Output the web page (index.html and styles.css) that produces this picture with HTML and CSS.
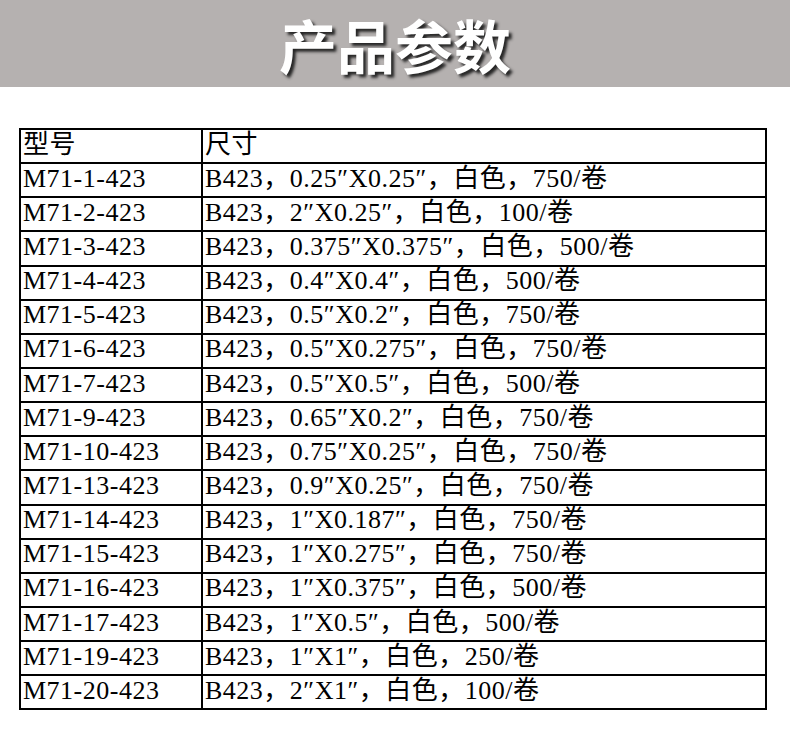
FILE: index.html
```html
<!DOCTYPE html>
<html lang="zh">
<head>
<meta charset="utf-8">
<title>产品参数</title>
<link rel="stylesheet" href="styles.css">
</head>
<body>
<header class="band">
  <h1 class="title">产品参数</h1>
</header>
<main class="content">
  <table class="spec">
    <colgroup><col class="c1"><col class="c2"></colgroup>
    <tbody>
      <tr><td>型号</td><td>尺寸</td></tr>
      <tr><td>M71-1-423</td><td>B423，0.25″X0.25″，白色，750/卷</td></tr>
      <tr><td>M71-2-423</td><td>B423，2″X0.25″，白色，100/卷</td></tr>
      <tr><td>M71-3-423</td><td>B423，0.375″X0.375″，白色，500/卷</td></tr>
      <tr><td>M71-4-423</td><td>B423，0.4″X0.4″，白色，500/卷</td></tr>
      <tr><td>M71-5-423</td><td>B423，0.5″X0.2″，白色，750/卷</td></tr>
      <tr><td>M71-6-423</td><td>B423，0.5″X0.275″，白色，750/卷</td></tr>
      <tr><td>M71-7-423</td><td>B423，0.5″X0.5″，白色，500/卷</td></tr>
      <tr><td>M71-9-423</td><td>B423，0.65″X0.2″，白色，750/卷</td></tr>
      <tr><td>M71-10-423</td><td>B423，0.75″X0.25″，白色，750/卷</td></tr>
      <tr><td>M71-13-423</td><td>B423，0.9″X0.25″，白色，750/卷</td></tr>
      <tr><td>M71-14-423</td><td>B423，1″X0.187″，白色，750/卷</td></tr>
      <tr><td>M71-15-423</td><td>B423，1″X0.275″，白色，750/卷</td></tr>
      <tr><td>M71-16-423</td><td>B423，1″X0.375″，白色，500/卷</td></tr>
      <tr><td>M71-17-423</td><td>B423，1″X0.5″，白色，500/卷</td></tr>
      <tr><td>M71-19-423</td><td>B423，1″X1″，白色，250/卷</td></tr>
      <tr><td>M71-20-423</td><td>B423，2″X1″，白色，100/卷</td></tr>
    </tbody>
  </table>
</main>
</body>
</html>
```
FILE: styles.css
```css
html, body {
  margin: 0;
  padding: 0;
  background: #ffffff;
}

.band {
  height: 87px;
  background: #b5b1b0;
  display: flex;
  align-items: center;
  justify-content: center;
}

.title {
  margin: 0;
  font-family: "Noto Sans CJK SC", "Noto Sans", sans-serif;
  font-weight: 700;
  font-size: 58px;
  line-height: 1;
  color: #ffffff;
  text-shadow: 3px 3px 3px rgba(30, 30, 30, 0.95);
}

.content {
  padding: 41px 0 0 19px;
}

.spec {
  border-collapse: collapse;
  width: 748px;
  table-layout: fixed;
  font-family: "Liberation Serif", "Noto Sans CJK SC", serif;
  font-size: 26px;
  letter-spacing: 0.5px;
  color: #000000;
}

.c1 { width: 182px; }

.spec td {
  border: 2px solid #000000;
  padding: 0 2px 3px 2px;
  line-height: 20px;
  vertical-align: middle;
  white-space: nowrap;
  overflow: hidden;
}

.spec tr {
  height: 34.15px;
}
```
